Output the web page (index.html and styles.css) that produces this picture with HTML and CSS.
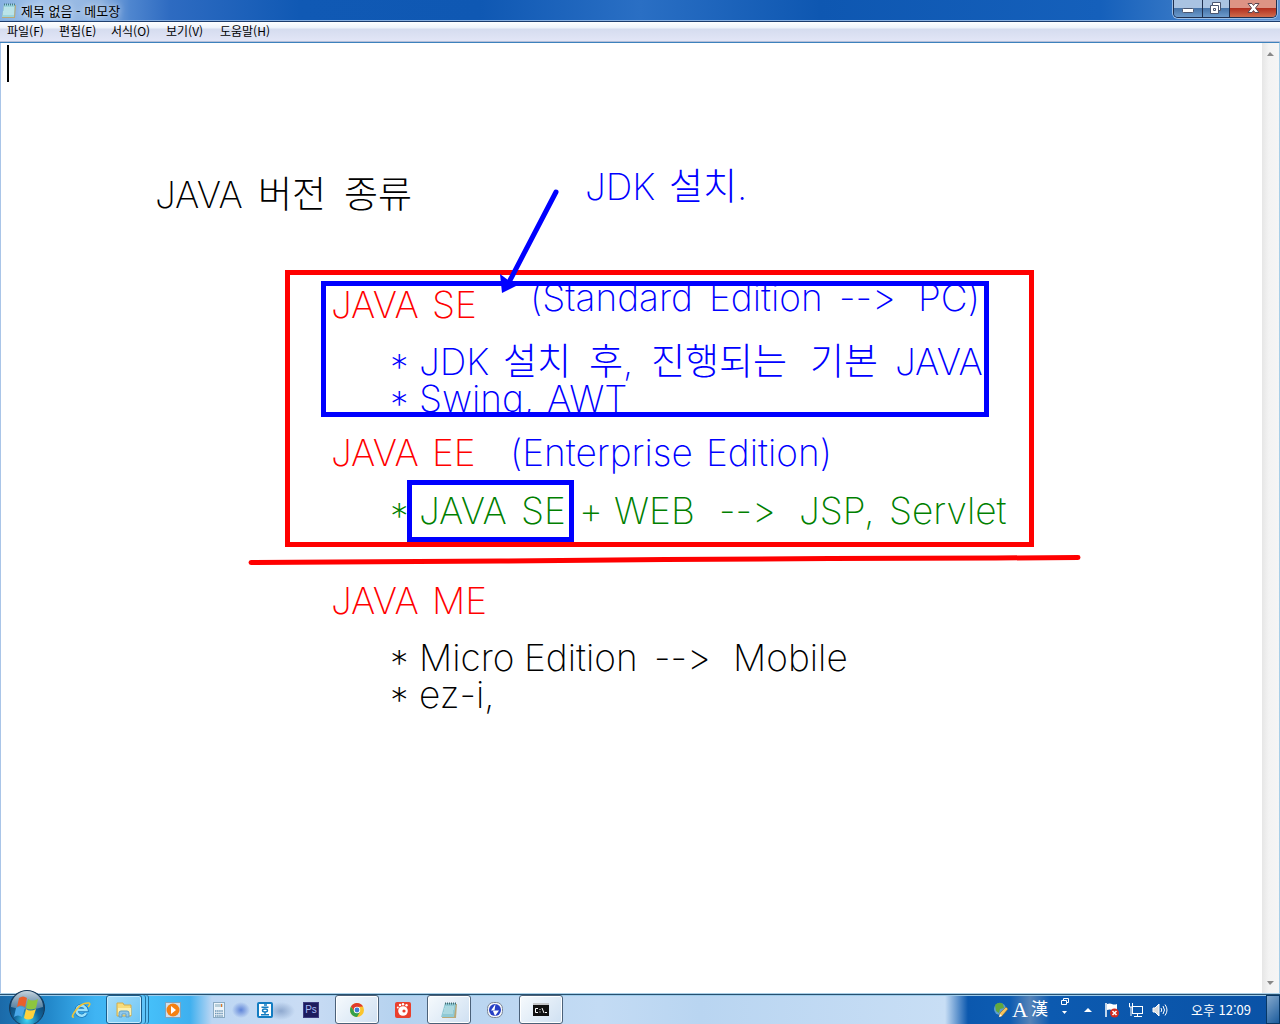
FILE: index.html
```html
<!DOCTYPE html>
<html lang="ko">
<head>
<meta charset="utf-8">
<title>제목 없음 - 메모장</title>
<link rel="stylesheet" href="styles.css">
</head>
<body>
<header class="titlebar">
  <svg class="app-icon" width="16" height="16" viewBox="0 0 16 16"><path d="M3 2h12l-1 13H1z" fill="#b9a878"/><path d="M3 1h11l-1 13H1z" fill="#9bd5dd"/><path d="M3 5h10M3 7h10M2 9h11M2 11h11" stroke="#d9f2f4"/><path d="M3 1.500h11" stroke="#477a8b" stroke-width="2" stroke-dasharray="1 1"/></svg>
  <h1 class="title">제목 없음 - 메모장</h1>
  <div class="window-buttons">
    <button class="wbtn" aria-label="최소화"><svg width="28" height="17" viewBox="0 0 28 17"><rect x="8.500" y="8.500" width="11" height="4" rx="1" fill="#fff" stroke="#4a5670"/></svg></button>
    <button class="wbtn" aria-label="이전 크기로 복원"><svg width="26" height="17" viewBox="0 0 26 17"><path d="M9.500 2.500h8v8h-2v3h-8v-8h2z" fill="#fff" stroke="#4a5670"/><path d="M9.500 5.500h6v6M10.500 8.500h2v2h-2z" fill="none" stroke="#4a5670"/></svg></button>
    <button class="wbtn close" aria-label="닫기"><svg width="46" height="17" viewBox="0 0 46 17"><path d="M18 3.500h4l1.500 2 1.500-2h4L25.500 8l3.500 4.500h-4l-1.500-2-1.500 2h-4L21.500 8z" fill="#fff" stroke="#5b4650"/></svg></button>
  </div>
</header>
<nav class="menubar">
  <button>파일(F)</button><button>편집(E)</button><button>서식(O)</button><button>보기(V)</button><button>도움말(H)</button>
</nav>
<main class="editor">
  <div class="canvas">
    <span class="caret"></span>
    <p class="note black n-title"><span>JAVA</span> <span>버전</span> <span>종류</span></p>
    <p class="note blue n-install"><span>JDK</span> <span>설치.</span></p>
    <div class="se-box">
      <p class="note red edition n-se"><span>JAVA</span> <span>SE</span></p>
      <p class="note blue n-standard"><span>(Standard</span> <span>Edition</span> <span>--&gt;</span> <span>PC)</span></p>
      <p class="note blue n-jdk"><span class="star">*</span> <span>JDK</span> <span>설치</span> <span>후,</span> <span>진행되는</span> <span>기본</span> <span>JAVA</span></p>
      <p class="note blue n-swing"><span class="star">*</span> <span>Swing,</span> <span>AWT</span></p>
    </div>
    <p class="note red edition n-ee"><span>JAVA</span> <span>EE</span></p>
    <p class="note blue n-enterprise"><span>(Enterprise</span> <span>Edition)</span></p>
    <p class="note green n-web"><span class="star">*</span> <span>JAVA</span> <span>SE</span> <span>+</span> <span>WEB</span> <span>--&gt;</span> <span>JSP,</span> <span>Servlet</span></p>
    <p class="note red edition n-me"><span>JAVA</span> <span>ME</span></p>
    <p class="note black n-micro"><span class="star">*</span> <span>Micro</span> <span>Edition</span> <span>--&gt;</span> <span>Mobile</span></p>
    <p class="note black n-ez"><span class="star">*</span> <span>ez-i,</span></p>
    <svg class="ink" width="1100" height="560" viewBox="0 43 1100 560" fill="none" stroke-width="5">
      <rect x="287.500" y="272.500" width="744" height="272" stroke="#f00"/>
      <path d="M251 562.500L500 561L665 559.500L830 558.500L996 558L1078 557.500" stroke="#f00" stroke-linecap="round"/>
      <rect x="409.500" y="482.500" width="162" height="57" stroke="#00f"/>
      <path d="M556 192L507 286" stroke="#00f" stroke-linecap="round"/>
      <path d="M500 274L516 286L502 293z" fill="#00f"/>
    </svg>
  </div>
  <div class="scrollbar">
    <button aria-label="위로"><svg width="7" height="4"><path d="M0 4L3 0 7 4z" fill="#888"/></svg></button>
    <button aria-label="아래로"><svg width="7" height="4"><path d="M0 0h7L3 4z" fill="#888"/></svg></button>
  </div>
</main>
<footer class="taskbar">
  <button class="start" aria-label="시작"><svg width="38" height="38" viewBox="0 0 38 38"><defs><radialGradient id="orb" cx=".5" cy=".85" r=".8"><stop offset="0" stop-color="#3fd5f5"/><stop offset=".45" stop-color="#12659c"/><stop offset="1" stop-color="#0c3559"/></radialGradient><linearGradient id="gloss" x2="0" y2="1"><stop offset="0" stop-color="#dce8ef" stop-opacity=".9"/><stop offset="1" stop-color="#7d9db6" stop-opacity=".6"/></linearGradient></defs><circle cx="19" cy="19" r="17.500" fill="url(#orb)" stroke="#16395a"/><path d="M3 18a16 16 0 0 1 32 0q-15 5-32 0z" fill="url(#gloss)"/><path d="M11 9q4-3 8 0l-2 9q-4-3-8 0z" fill="#e8602c"/><path d="M20 10q4 3 10 0l-2 9q-5 3-10 0z" fill="#8dc63f"/><path d="M8 19q4-3 9 0l-3 9q-4-3-8 0z" fill="#4aa8e8"/><path d="M18 20q4 3 10 0l-3 9q-5 3-9 0z" fill="#ffd23c"/></svg></button>
  <div class="apps">
    <button class="app" aria-label="Internet Explorer"><svg width="20" height="18" viewBox="0 0 20 18"><path d="M15 12A5 5 0 1 1 15.500 9H6" fill="none" stroke="#1c79bd" stroke-width="4"/><path d="M15 12A5 5 0 1 1 15.500 9H6" fill="none" stroke="#9be1fb" stroke-width="2.500"/><path d="M3 16Q-1 17 5 9T18 2q2 1-1 4" fill="none" stroke="#f3c433" stroke-width="1.500"/></svg></button>
    <button class="app open stack" aria-label="탐색기"><svg width="18" height="16" viewBox="0 0 18 16"><path d="M2 1h6l1 2h7v11H2z" fill="#f7dc7c" stroke="#d5ad4a"/><path d="M3 6h13v7H3z" fill="#fdf0ae"/><path d="M4 15v-4q0-2 2-2h6q2 0 2 2v4h-3v-3H7v3z" fill="#90c8ea" stroke="#5d9fc9"/></svg></button>
    <button class="app" aria-label="미디어 플레이어"><svg width="16" height="16" viewBox="0 0 16 16"><rect x=".5" y=".5" width="15" height="15" fill="#cfdfec" stroke="#7fa4bd"/><circle cx="8" cy="8" r="6.500" fill="#f58010"/><path d="M6 4l5 4-5 4z" fill="#fff"/></svg></button>
    <button class="app" aria-label="계산기"><svg width="12" height="16" viewBox="0 0 12 16"><rect x=".5" y=".5" width="11" height="15" fill="#edf4fa" stroke="#8baac2"/><path d="M2 3.500h8" stroke="#b8ced9" stroke-width="3"/><path d="M8 3.500h1" stroke="#e87722" stroke-width="3"/><path d="M2 9h8M2 11.500h8M2 14h8" stroke="#6c94b4" stroke-width="1.500" stroke-dasharray="1.500 .6"/></svg></button>
    <button class="app" aria-label="한글"><svg width="16" height="16" viewBox="0 0 16 16"><rect x="1" y="1" width="14" height="14" rx="1" fill="#fff" stroke="#137cc2" stroke-width="2"/><path d="M7 3h3M4.500 5.200h7M8 10v3M4 12.700h8" stroke="#137cc2" stroke-width="1.400"/><ellipse cx="8" cy="8.500" rx="2.500" ry="1.500" fill="none" stroke="#137cc2" stroke-width="1.400"/></svg></button>
    <button class="app" aria-label="Photoshop"><span class="ps">Ps</span></button>
    <button class="app open" aria-label="Chrome"><svg width="14" height="14" viewBox="0 0 14 14"><circle cx="7" cy="7" r="7" fill="#fbc52d"/><path d="M1 3.500A7 7 0 0 1 13 3.500L7 4 5 9z" fill="#df3a2d"/><path d="M1 3.500A7 7 0 0 0 7 14l3-5-5 .5z" fill="#35a14c"/><circle cx="7" cy="7" r="3.200" fill="#fff"/><circle cx="7" cy="7" r="2.400" fill="#3a7bd5"/></svg></button>
    <button class="app" aria-label="곰플레이어"><svg width="16" height="16" viewBox="0 0 16 16"><rect width="16" height="16" rx="2" fill="#ea3f2c"/><circle cx="8" cy="9" r="4.800" fill="#fff"/><circle cx="9" cy="9" r="1.600" fill="#ea3f2c"/><g fill="#fff"><circle cx="2.800" cy="5.500" r="1"/><circle cx="5" cy="3" r="1.200"/><circle cx="8" cy="2.300" r="1.200"/><circle cx="11.500" cy="3.200" r="1.200"/></g></svg></button>
    <button class="app open" aria-label="메모장"><svg width="16" height="16" viewBox="0 0 16 16"><path d="M4 2h12l-1 14H1z" fill="#b9a878"/><path d="M4 1h11l-2 14H0z" fill="#8fc9d5"/><path d="M4 5h9M3 7h10M3 9h9M2 11h10" stroke="#c5e7ec"/><path d="M4 1.500h11" stroke="#446a72" stroke-width="2" stroke-dasharray="1 1"/></svg></button>
    <button class="app" aria-label="번개"><svg width="16" height="16" viewBox="0 0 16 16"><rect x=".5" y=".5" width="15" height="15" rx="6" fill="#f4f6fa" stroke="#7c8797"/><circle cx="8" cy="8" r="6" fill="#263fc4"/><path d="M8.500 2L4 8.500h4.500L6 9l2 5 4-5.500H7.500z" fill="#fff"/></svg></button>
    <button class="app open" aria-label="명령 프롬프트"><svg width="16" height="13" viewBox="0 0 16 13"><rect width="16" height="13" fill="#111"/><path d="M0 1h16" stroke="#c5c7ca" stroke-width="2"/><path d="M5 5.500H2.500v4H5M7 6v1M7 8.500v1M9 5l2 5M12 9.500h2" fill="none" stroke="#fff"/></svg></button>
  </div>
  <div class="tray">
    <svg width="16" height="16" viewBox="0 0 16 16"><circle cx="7" cy="7" r="6" fill="#5c9ed0"/><path d="M2 3q4-4 8-1l1 4-4 1-1 4-3-2z" fill="#62a83d"/><path d="M6 15l1-4 6-6 2 2-6 7z" fill="#f6c35c" stroke="#7f6325" stroke-width=".5"/><path d="M6 15l1-3 2 2z" fill="#fff"/></svg>
    <span class="ime-a">A</span><span class="ime-han">漢</span>
    <svg class="ime-opts" width="10" height="20" viewBox="0 0 10 20" fill="none" stroke="#fff"><path d="M3.500 3V1.500h5v4H7M1.500 3.500h5v4h-5z"/><path d="M2 14h5L4.500 17z" fill="#fff" stroke="none"/></svg>
    <svg class="more" width="8" height="4"><path d="M0 4L4 0 8 4z" fill="#fff"/></svg>
    <svg class="flag" width="16" height="16" viewBox="0 0 16 16"><path d="M2 1v14" stroke="#fff" stroke-width="1.500"/><path d="M3 2q3-1 5 0t5 0v6q-3 1-5 0T3 8z" fill="#fff"/><circle cx="10.500" cy="11" r="4.500" fill="#d22c20"/><path d="M8.500 9l4 4m0-4l-4 4" stroke="#fff" stroke-width="1.500"/></svg>
    <svg class="net" width="16" height="16" viewBox="0 0 16 16" fill="none" stroke="#fff"><rect x="4.500" y="4.500" width="10" height="7"/><path d="M9.500 12v2M6 14.500h8M1.500 1v4h3V1M3 5v9"/></svg>
    <svg class="sound" width="16" height="16" viewBox="0 0 16 16" fill="none" stroke="#fff"><path d="M1 6h2l4-4v12l-4-4H1z" fill="#ddd"/><path d="M9 6q1.500 2 0 4M11 4q3 4 0 8M13 2.500q4 5.500 0 11"/></svg>
    <time class="clock">오후 12:09</time>
    <button class="show-desktop" aria-label="바탕 화면 보기"></button>
  </div>
</footer>
</body>
</html>
```
FILE: styles.css
```css
* { box-sizing: border-box; }
html, body { height: 100%; margin: 0; }
body {
  display: flex;
  flex-direction: column;
  overflow: hidden;
  background: #fff;
  font: 12px/16px "Noto Sans CJK KR", sans-serif;
  color: #000;
}
button { margin: 0; padding: 0; border: 0; background: none; font: inherit; color: inherit; }
svg { display: block; flex: none; }

.titlebar {
  display: flex;
  flex: none;
  align-items: center;
  gap: 4px;
  height: 22px;
  padding-left: 1px;
  border-bottom: 1px solid #1c3c6c;
  box-shadow: inset 0 -1px #85aee0;
  background: linear-gradient(90deg, #86b1e2 0, #a4c3e8 40px, #8fb3e0 100px, #4f86cf 130px, #2e6bc1 170px, #1059b4 300px, #0f58b3 480px, #2a6fc4 640px, #0e57b1 820px, #1560bb 1100px, #5d93d2 100%);
}
.title { flex: 1; margin: 0; font-size: 13px; font-weight: 400; text-shadow: 0 0 6px #fff; }
.window-buttons {
  display: flex;
  align-self: flex-start;
  margin-right: 3px;
  border: 1px solid #1f2f4e;
  border-top: 0;
  border-radius: 0 0 5px 5px;
  overflow: hidden;
  box-shadow: 0 0 0 1px #9dbfe6;
}
.wbtn { height: 17px; background: linear-gradient(#a9c3e2 0 45%, #4774a9 50%, #6c9bcc); border-right: 1px solid #1f2f4e; }
.wbtn.close { background: linear-gradient(#dd9384 0 45%, #b3301f 50%, #cf6b4c); border-right: 0; }

.menubar {
  display: flex;
  flex: none;
  height: 20px;
  border-bottom: 1px solid #b5bfd9;
  background: linear-gradient(#fff 0, #edf2fa 6px, #d5dcef 7px, #e1e5f6 18px);
}
.menubar button { width: 52px; padding: 0 0 2px 7px; text-align: left; white-space: nowrap; }
.menubar button:nth-child(3) { width: 55px; }
.menubar button:nth-child(4) { width: 54px; }
.menubar button:last-child { width: 70px; }

.editor {
  display: flex;
  flex: 1;
  min-height: 0;
  border: 1px solid #3d82bd;
  border-width: 1px 1px 1px 0;
  border-right-color: #a9cfe8;
  border-bottom-color: #a9cfe8;
  box-shadow: inset 1px 0 #a9c5e8;
}
.canvas { position: relative; flex: 1; overflow: hidden; }
.scrollbar {
  display: flex;
  flex-direction: column;
  justify-content: space-between;
  width: 17px;
  padding: 2px 0;
  background: linear-gradient(90deg, #e6e6e6, #f3f3f3 40%, #f5f5f5);
}
.scrollbar button { display: flex; align-items: center; justify-content: center; height: 17px; }

/* notes on the free canvas; the columns are the word stops of each line */
.caret { position: absolute; left: 7px; top: 2px; width: 2px; height: 37px; background: #000; }
.note {
  position: absolute;
  display: grid;
  margin: 0;
  white-space: nowrap;
  font: 200 37px/37px Inter, "Noto Sans CJK KR", sans-serif;
  font-variant-ligatures: none;
  font-feature-settings: "calt" 0;
}
.star { padding-top: 6px; height: 37px; }
.black { color: #000; }
.blue { color: #00f; }
.red { color: #f00; }
.green { color: #008000; }
.edition { grid-template-columns: 101px auto; }
.n-title { left: 155px; top: 133px; grid-template-columns: 103px 86px auto; }
.n-install { left: 585px; top: 125px; grid-template-columns: 84px auto; }
.se-box { position: absolute; left: 321px; top: 238px; width: 668px; height: 136px; border: 5px solid #00f; overflow: hidden; }
.n-se { left: 5px; top: 0; }
.n-standard { left: 204px; top: -7px; grid-template-columns: 179px 130px 79px auto; }
.n-jdk { left: 64px; top: 57px; grid-template-columns: 29px 84px 86px 62px 159px 85px auto; }
.n-swing { left: 64px; top: 94px; grid-template-columns: 29px 128px auto; }
.n-ee { left: 331px; top: 391px; }
.n-enterprise { left: 510px; top: 391px; grid-template-columns: 196px auto; }
.n-web { left: 390px; top: 449px; grid-template-columns: 29px 102px 58px 35px 105px 80px 90px auto; }
.n-me { left: 331px; top: 539px; }
.n-micro { left: 390px; top: 596px; grid-template-columns: 29px 105px 130px 79px auto; }
.n-ez { left: 390px; top: 633px; grid-template-columns: 29px auto; }
.ink { position: absolute; left: 0; top: 0; }

.taskbar {
  display: flex;
  flex: none;
  height: 30px;
  border-top: 1px solid #27506f;
  box-shadow: inset 0 1px #9dcbea;
  background: linear-gradient(90deg, #1b6aa9 0, #2389cb 50px, #3fb4f3 95px, #45bff9 150px, #3fb0ef 190px, #bcd6f3 212px, #c9dcf4 300px, #b5d2ef 400px, #c3dbf4 600px, #b9d5f1 700px, #c8def5 945px, #0b58ae 968px, #0d5cb2 1010px, #5583b8 1030px, #0c5ab0 1050px, #0a52a6 100%);
}
.start { width: 58px; height: 38px; margin-top: -6px; padding-left: 8px; }
.apps {
  display: flex;
  flex: 1;
  background:
    radial-gradient(9px 8px at 183px 15px, #5f84d8, transparent),
    radial-gradient(14px 9px at 223px 16px, #8fa9cf, transparent);
}
.app { display: flex; align-items: center; justify-content: center; width: 46px; height: 29px; }
.app.open {
  width: 44px;
  margin: 0 1px;
  border: 1px solid #4b6179;
  border-radius: 3px;
  background: linear-gradient(135deg, #f6fafd, #cfe0f2);
  box-shadow: inset 0 0 0 1px #fff;
}
.app.open.stack {
  width: 36px;
  margin: 0 8px 0 2px;
  border-color: #1b5d8b;
  background: linear-gradient(135deg, #a6dcf9, #6cc5f5);
  box-shadow: inset 0 0 0 1px #c5ecff, 3px 0 #5fc4f8, 4px 0 #1f709f, 6px 0 #5fc4f8, 7px 0 #1f709f;
}
.ps { width: 16px; height: 16px; background: #1c1c5d; color: #a9bdf5; font: 10px/14px "Liberation Sans", sans-serif; border: 1px solid #3c3c80; }

.tray { display: flex; align-items: center; color: #fff; }
.ime-a { width: 22px; padding-left: 3px; font: 22px/24px "Liberation Serif", serif; }
.ime-han { width: 17px; font-size: 17px; line-height: 20px; padding-bottom: 4px; }
.ime-opts { margin: 0 14px 6px 12px; }
.more { margin-right: 12px; }
.flag, .net { margin-right: 8px; }
.sound { margin-right: 23px; }
.clock { width: 75px; font-size: 13px; }
.show-desktop { width: 14px; height: 29px; border: 1px solid #073765; background: linear-gradient(135deg, #84a8cc, #1c5c9d); }
```
